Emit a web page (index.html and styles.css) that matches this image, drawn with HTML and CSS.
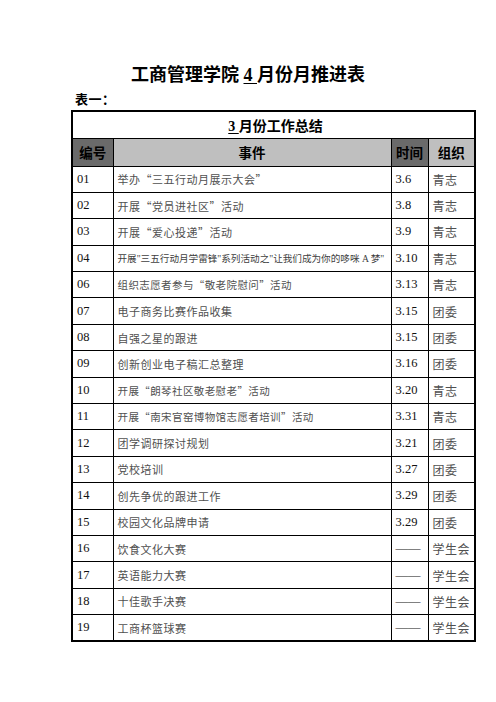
FILE: index.html
```html
<!DOCTYPE html>
<html lang="zh-CN">
<head>
<meta charset="utf-8">
<title>工商管理学院4月份月推进表</title>
<link rel="stylesheet" href="styles.css">
</head>
<body>
<h1 class="title">工商管理学院 <u>4 </u>月份月推进表</h1>
<p class="label">表一：</p>
<table class="plan">
  <colgroup>
    <col class="c-no">
    <col class="c-ev">
    <col class="c-tm">
    <col class="c-org">
  </colgroup>
  <tr class="cap-row"><td colspan="4" class="cap"><u>3 </u>月份工作总结</td></tr>
  <tr class="head-row">
    <th class="dark">编号</th>
    <th class="light">事件</th>
    <th class="dark">时间</th>
    <th class="light">组织</th>
  </tr>
  <tr><td class="no">01</td><td class="ev">举办“三五行动月展示大会”</td><td class="tm">3.6</td><td class="org">青志</td></tr>
  <tr><td class="no">02</td><td class="ev">开展“党员进社区”活动</td><td class="tm">3.8</td><td class="org">青志</td></tr>
  <tr><td class="no">03</td><td class="ev">开展“爱心投递”活动</td><td class="tm">3.9</td><td class="org">青志</td></tr>
  <tr><td class="no">04</td><td class="ev small">开展"三五行动月学雷锋"系列活动之"让我们成为你的哆咪 A 梦"</td><td class="tm">3.10</td><td class="org">青志</td></tr>
  <tr><td class="no">06</td><td class="ev tight">组织志愿者参与“敬老院慰问”活动</td><td class="tm">3.13</td><td class="org">青志</td></tr>
  <tr><td class="no">07</td><td class="ev">电子商务比赛作品收集</td><td class="tm">3.15</td><td class="org">团委</td></tr>
  <tr><td class="no">08</td><td class="ev">自强之星的跟进</td><td class="tm">3.15</td><td class="org">团委</td></tr>
  <tr><td class="no">09</td><td class="ev">创新创业电子稿汇总整理</td><td class="tm">3.16</td><td class="org">团委</td></tr>
  <tr><td class="no">10</td><td class="ev tight">开展“朗琴社区敬老慰老”活动</td><td class="tm">3.20</td><td class="org">青志</td></tr>
  <tr><td class="no">11</td><td class="ev tight">开展“南宋官窑博物馆志愿者培训”活动</td><td class="tm">3.31</td><td class="org">青志</td></tr>
  <tr><td class="no">12</td><td class="ev">团学调研探讨规划</td><td class="tm">3.21</td><td class="org">团委</td></tr>
  <tr><td class="no">13</td><td class="ev">党校培训</td><td class="tm">3.27</td><td class="org">团委</td></tr>
  <tr><td class="no">14</td><td class="ev">创先争优的跟进工作</td><td class="tm">3.29</td><td class="org">团委</td></tr>
  <tr><td class="no">15</td><td class="ev">校园文化品牌申请</td><td class="tm">3.29</td><td class="org">团委</td></tr>
  <tr><td class="no">16</td><td class="ev">饮食文化大赛</td><td class="tm">——</td><td class="org">学生会</td></tr>
  <tr><td class="no">17</td><td class="ev">英语能力大赛</td><td class="tm">——</td><td class="org">学生会</td></tr>
  <tr><td class="no">18</td><td class="ev">十佳歌手决赛</td><td class="tm">——</td><td class="org">学生会</td></tr>
  <tr><td class="no">19</td><td class="ev">工商杯篮球赛</td><td class="tm">——</td><td class="org">学生会</td></tr>
</table>
</body>
</html>
```
FILE: styles.css
```css
html, body {
  margin: 0;
  padding: 0;
  background: #ffffff;
}
body {
  font-family: "Liberation Serif", "Noto Sans CJK SC", serif;
  color: #111;
}
.title {
  margin: 63px 0 0;
  font-size: 18px;
  line-height: 24px;
  font-weight: bold;
  text-align: center;
  color: #000;
}
.title u {
  text-decoration-thickness: 1px;
  text-underline-offset: 2px;
}
.label {
  margin: 3px 0 0 75px;
  font-size: 13px;
  line-height: 20px;
  font-weight: bold;
  color: #000;
  letter-spacing: 0.5px;
}
.plan {
  margin-left: 71px;
  width: 403px;
  border-collapse: collapse;
  table-layout: fixed;
  border: 2px solid #000;
}
.c-no { width: 41px; }
.c-ev { width: 278px; }
.c-tm { width: 37px; }
.c-org { width: 47px; }
.plan td, .plan th {
  border: 1px solid #000;
  padding: 0 0 0 4px;
  white-space: nowrap;
  overflow: hidden;
}
.cap {
  text-align: center;
  font-weight: bold;
  font-size: 14px;
  color: #000;
}
.cap u {
  text-decoration-thickness: 1px;
  text-underline-offset: 2px;
}
.plan th {
  font-size: 13.5px;
  font-weight: bold;
  color: #000;
  text-align: center;
  padding: 0;
}
.dark { background: #6a6a6a; }
.light { background: #bfbfbf; }
.plan tr { height: 26.4px; }
.plan .cap-row { height: 27px; }
.plan .head-row { height: 28px; }
.no, .tm {
  font-size: 12.5px;
  color: #111;
}
.ev {
  font-family: "Noto Sans CJK SC", "Liberation Serif", sans-serif;
  font-feature-settings: "fwid";
  font-size: 11px;
  letter-spacing: 0.5px;
  color: #505050;
  padding-left: 5px;
}
.ev.tight {
  font-size: 10.5px;
  letter-spacing: 0.4px;
}
.ev.small {
  font-family: "Liberation Serif", "Noto Sans CJK SC", serif;
  font-feature-settings: normal;
  font-size: 9.6px;
  letter-spacing: 0;
  color: #404040;
}
.org {
  font-family: "Noto Sans CJK SC", sans-serif;
  font-size: 12px;
  letter-spacing: 0.5px;
  color: #505050;
  padding-left: 5px;
}
```
